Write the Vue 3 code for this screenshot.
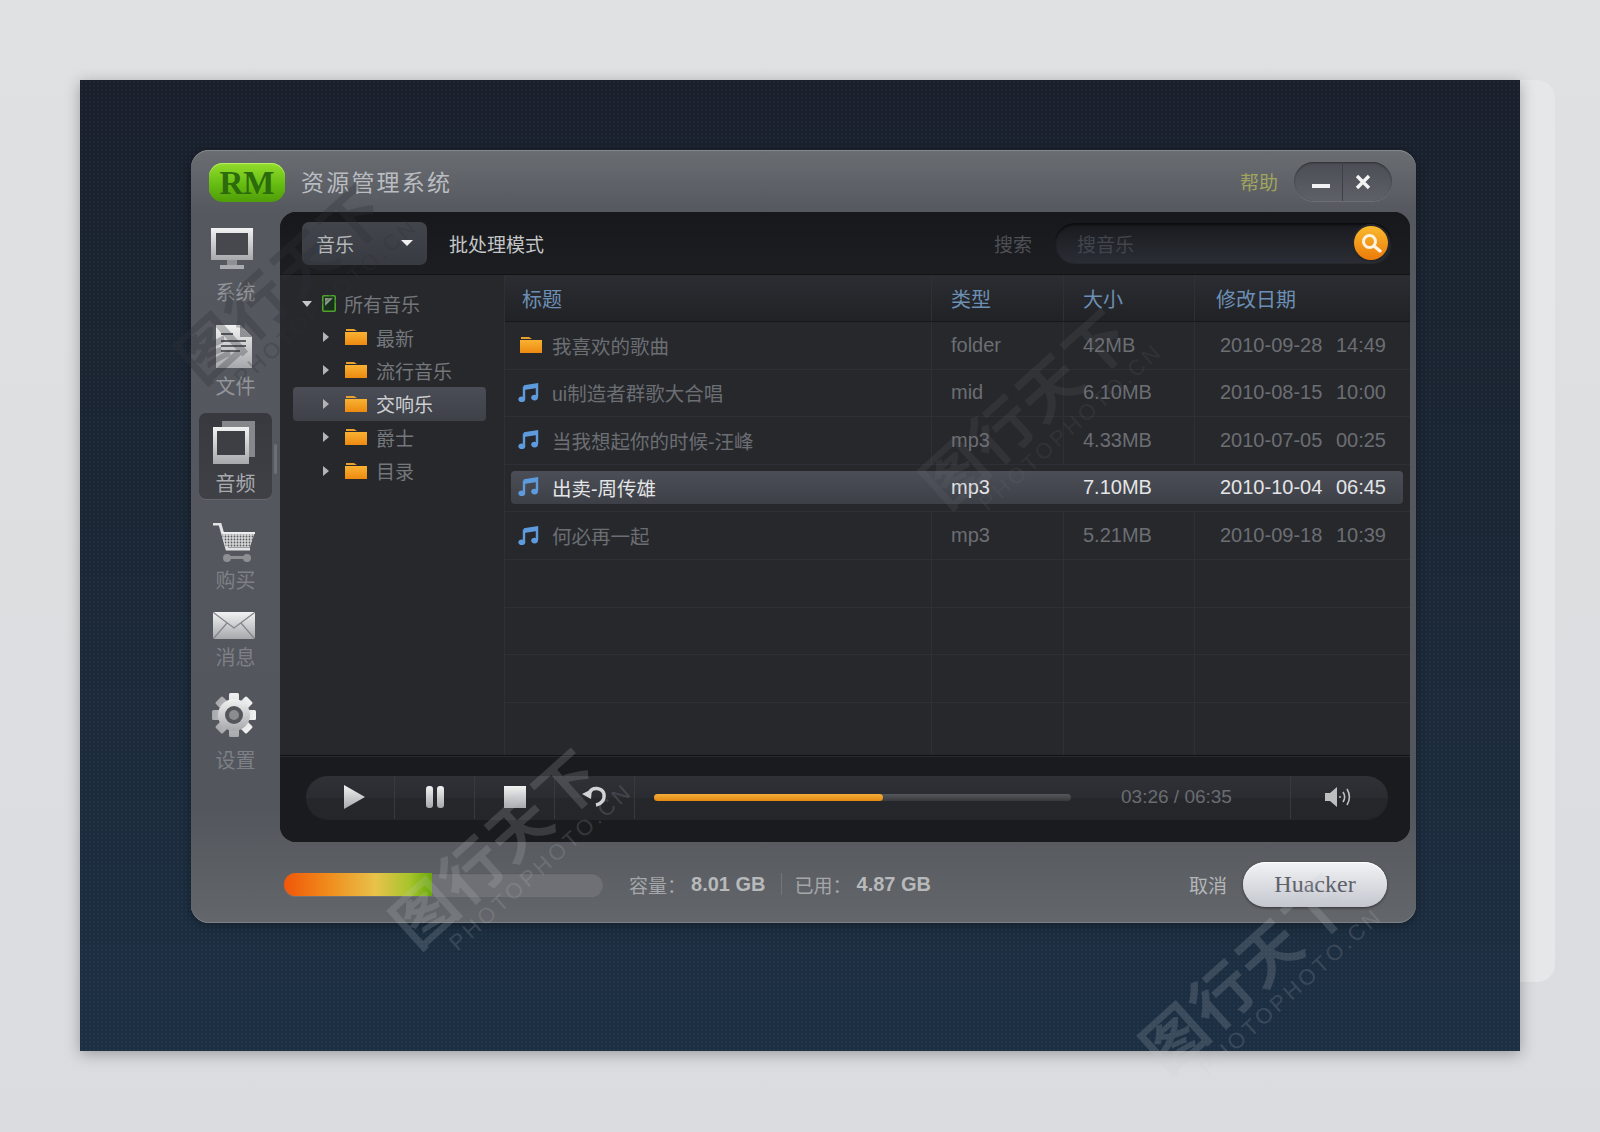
<template>
  <div class="page">
    <div class="ghost"></div>
    <div class="stage">
      <div class="window">
        <header class="titlebar">
          <div class="logo">RM</div>
          <h1 class="app-title">资源管理系统</h1>
          <a class="help">帮助</a>
          <div class="win-btns">
            <span class="win-btn"><i class="min-bar"></i></span>
            <span class="win-btn">
              <svg width="18" height="18" viewBox="0 0 18 18"><path d="M3 3l12 12M15 3L3 15" stroke="#f4f4f4" stroke-width="3.4" /></svg>
            </span>
          </div>
        </header>

        <div class="body">
          <nav class="side">
            <div class="nav-item n-sys">
              <svg width="44" height="42" viewBox="0 0 44 42">
                <rect x="1" y="0" width="42" height="32" fill="url(#silver)" />
                <rect x="6" y="5" width="32" height="22" fill="#46484e" />
                <rect x="17" y="32" width="10" height="5" fill="#8e9094" />
                <rect x="10" y="37" width="24" height="4" fill="#a9abae" />
              </svg>
              <span class="nav-label l-sys">系统</span>
            </div>
            <div class="nav-item n-file">
              <svg width="36" height="43" viewBox="0 0 36 43">
                <path d="M0 0H24L36 12V43H0Z" fill="url(#silver)" />
                <path d="M24 0L36 12H24Z" fill="#8e9094" />
                <path d="M5 9H17M5 16H30M5 21H30M5 26H24" stroke="#5b5d62" stroke-width="2" />
              </svg>
              <span class="nav-label">文件</span>
            </div>
            <div class="nav-item nav-active">
              <svg width="44" height="44" viewBox="0 0 44 44">
                <path d="M10 0H43V36H36V6H10Z" fill="#85878b" />
                <rect x="1" y="6" width="36" height="37" fill="url(#silver)" />
                <rect x="5" y="10" width="28" height="24" fill="#3d3f45" />
              </svg>
              <span class="nav-label">音频</span>
            </div>
            <div class="nav-item n-cart">
              <svg width="44" height="40" viewBox="0 0 44 40">
                <defs>
                  <pattern id="cartdots" width="3" height="3" patternUnits="userSpaceOnUse"><rect width="3" height="3" fill="#d6d7d8" /><circle cx="1.5" cy="1.5" r="0.9" fill="#5a5c60" /></pattern>
                </defs>
                <path d="M1 1H8L15 26H38" fill="none" stroke="#e2e3e4" stroke-width="3" />
                <path d="M9 9H43L38 24H14Z" fill="url(#cartdots)" />
                <path d="M9 9H43V11H10Z" fill="#eee" />
                <rect x="14" y="33" width="22" height="3" fill="#8d8f93" />
                <circle cx="15" cy="35" r="4" fill="#8d8f93" />
                <circle cx="35" cy="35" r="4" fill="#8d8f93" />
              </svg>
              <span class="nav-label dim">购买</span>
            </div>
            <div class="nav-item n-mail">
              <svg width="44" height="28" viewBox="0 0 44 28">
                <rect x="1" y="0" width="42" height="27" rx="2" fill="url(#silver)" />
                <path d="M2 1L22 16L42 1M2 26L15 11M42 26L29 11" fill="none" stroke="#83858a" stroke-width="1.2" />
              </svg>
              <span class="nav-label dim">消息</span>
            </div>
            <div class="nav-item n-gear">
              <svg width="44" height="44" viewBox="0 0 44 44">
                <g fill="url(#silver)">
                  <rect v-for="a in gearTeeth" :key="a" x="17" y="0" width="10" height="44" rx="1.5" :transform="`rotate(${a} 22 22)`" />
                  <circle cx="22" cy="22" r="16" />
                </g>
                <circle cx="22" cy="22" r="9" fill="#54565c" />
                <circle cx="22" cy="22" r="5" fill="#8a8c90" />
              </svg>
              <span class="nav-label dim">设置</span>
            </div>
            <i class="side-handle"></i>
          </nav>

          <main class="panel">
            <div class="toolbar">
              <div class="select">
                <span>音乐</span>
                <i class="caret-down"></i>
              </div>
              <span class="batch">批处理模式</span>
              <span class="search-label">搜索</span>
              <div class="search">
                <span class="placeholder">搜音乐</span>
                <span class="search-btn">
                  <svg width="22" height="22" viewBox="0 0 22 22">
                    <circle cx="9.5" cy="9.5" r="6" fill="none" stroke="#fff3df" stroke-width="3" />
                    <path d="M14 14l6 5" stroke="#fff3df" stroke-width="3.4" stroke-linecap="round" />
                  </svg>
                </span>
              </div>
            </div>

            <div class="content">
              <aside class="tree">
                <div class="tree-row root">
                  <i class="tri-down"></i>
                  <svg width="14" height="17" viewBox="0 0 14 17">
                    <rect x="0.8" y="0.8" width="12.4" height="15.4" rx="1" fill="#16301a" stroke="#4fa32a" stroke-width="1.6" />
                    <path d="M3 11V3H11Z" fill="#8f9a8c" />
                  </svg>
                  <span>所有音乐</span>
                </div>
                <div v-for="f in folders" :key="f.name" class="tree-row child" :class="{ on: f.on }">
                  <i class="tri-right"></i>
                  <svg class="folder" width="22" height="16" viewBox="0 0 22 16"><use href="#folder-icon" /></svg>
                  <span>{{ f.name }}</span>
                </div>
              </aside>

              <section class="table">
                <div class="row head">
                  <div class="cell c1">标题</div>
                  <div class="cell c2">类型</div>
                  <div class="cell c3">大小</div>
                  <div class="cell c4">修改日期</div>
                </div>
                <div v-for="r in rows" :key="r.title" class="row" :class="{ sel: r.sel }">
                  <div class="cell c1">
                    <svg v-if="r.type === 'folder'" class="row-icon fold" width="22" height="16" viewBox="0 0 22 16"><use href="#folder-icon" /></svg>
                    <svg v-else class="row-icon" width="22" height="20" viewBox="0 0 22 20">
                      <path d="M6 3.5L19 1.5V14M6 3.5V16" fill="none" stroke="#5d9bdc" stroke-width="2.4" />
                      <path d="M6 3.5L19 1.5V5L6 7Z" fill="#5d9bdc" />
                      <ellipse cx="3.8" cy="16.2" rx="3.4" ry="2.8" fill="#5d9bdc" />
                      <ellipse cx="16.6" cy="14.6" rx="3.4" ry="2.8" fill="#5d9bdc" />
                    </svg>
                    <span class="row-title">{{ r.title }}</span>
                  </div>
                  <div class="cell c2">{{ r.type }}</div>
                  <div class="cell c3">{{ r.size }}</div>
                  <div class="cell c4"><span>{{ r.date }}</span><span>{{ r.time }}</span></div>
                </div>
                <div v-for="n in 4" :key="n" class="row empty" :class="{ last: n === 4 }">
                  <div class="cell c1"></div>
                  <div class="cell c2"></div>
                  <div class="cell c3"></div>
                  <div class="cell c4"></div>
                </div>
              </section>
            </div>

            <div class="player">
              <div class="player-bar">
                <button class="pbtn first">
                  <svg width="22" height="24" viewBox="0 0 22 24"><path d="M1 0L22 12L1 24Z" fill="url(#silver)" /></svg>
                </button>
                <button class="pbtn">
                  <svg width="20" height="22" viewBox="0 0 20 22"><rect x="1" y="0" width="7" height="22" rx="3" fill="url(#silver)" /><rect x="12" y="0" width="7" height="22" rx="3" fill="url(#silver)" /></svg>
                </button>
                <button class="pbtn">
                  <svg width="22" height="22" viewBox="0 0 22 22"><rect width="22" height="22" fill="url(#silver)" /></svg>
                </button>
                <button class="pbtn">
                  <svg width="28" height="26" viewBox="0 0 28 26">
                    <path d="M9 8C11 3 21 3 23 10C24 16 20 20 15 21" fill="none" stroke="#d2d3d4" stroke-width="3.4" />
                    <path d="M1 10L11 5L10 15Z" fill="#d2d3d4" />
                  </svg>
                </button>
                <div class="track"><div class="track-fill" :style="{ width: progress + '%' }"></div></div>
                <span class="time">03:26 / 06:35</span>
                <button class="pbtn sound">
                  <svg width="26" height="20" viewBox="0 0 26 20">
                    <path d="M0 6H5L12 0V20L5 14H0Z" fill="#bdbec0" />
                    <circle cx="15" cy="10" r="1" fill="#bdbec0" />
                    <path d="M18 5C20 8 20 12 18 15M22 2C25 7 25 13 22 18" fill="none" stroke="#bdbec0" stroke-width="1.6" />
                  </svg>
                </button>
              </div>
            </div>
          </main>
        </div>

        <footer class="footer">
          <div class="capacity"><div class="capacity-fill" :style="{ width: usedPct + '%' }"></div></div>
          <span class="stat first-stat">容量：</span><b class="num">8.01 GB</b>
          <i class="stat-sep"></i>
          <span class="stat">已用：</span><b class="num">4.87 GB</b>
          <span class="cancel">取消</span>
          <button class="user-btn">Huacker</button>
        </footer>
      </div>
    </div>

    <div v-for="w in watermarks" :key="w.x" class="mark" :class="w.tone" :style="{ left: w.x + 'px', top: w.y + 'px' }">
      <div class="mark-cjk">图行天下</div>
      <div class="mark-en">PHOTOPHOTO.CN</div>
    </div>

    <svg class="defs" width="0" height="0">
      <defs>
        <linearGradient id="silver" x1="0" y1="0" x2="0" y2="1">
          <stop offset="0" stop-color="#f2f2f2" />
          <stop offset="1" stop-color="#a6a8ab" />
        </linearGradient>
        <linearGradient id="folderfill" x1="0" y1="0" x2="0" y2="1">
          <stop offset="0" stop-color="#f9b233" />
          <stop offset="1" stop-color="#ec8a10" />
        </linearGradient>
        <symbol id="folder-icon" viewBox="0 0 22 16">
          <path d="M1 0H9L12 2H1Z" fill="#e9a02c" />
          <rect x="0" y="3" width="22" height="13" fill="url(#folderfill)" />
        </symbol>
      </defs>
    </svg>
  </div>
</template>

<script setup>
const gearTeeth = [0, 45, 90, 135]
const progress = 54.9
const usedPct = 46.5

const folders = [
  { name: '最新' },
  { name: '流行音乐' },
  { name: '交响乐', on: true },
  { name: '爵士' },
  { name: '目录' },
]

const rows = [
  { title: '我喜欢的歌曲', type: 'folder', size: '42MB', date: '2010-09-28', time: '14:49' },
  { title: 'ui制造者群歌大合唱', type: 'mid', size: '6.10MB', date: '2010-08-15', time: '10:00' },
  { title: '当我想起你的时候-汪峰', type: 'mp3', size: '4.33MB', date: '2010-07-05', time: '00:25' },
  { title: '出卖-周传雄', type: 'mp3', size: '7.10MB', date: '2010-10-04', time: '06:45', sel: true },
  { title: '何必再一起', type: 'mp3', size: '5.21MB', date: '2010-09-18', time: '10:39' },
]

const watermarks = [
  { x: 160, y: 340, tone: 'dark' },
  { x: 905, y: 465, tone: 'mid' },
  { x: 375, y: 905, tone: 'light' },
  { x: 1125, y: 1030, tone: 'light' },
]
</script>

<style>
html, body { margin: 0; background: #dfe0e2; }
</style>

<style scoped>
.page {
  position: relative;
  width: 1600px;
  height: 1132px;
  overflow: hidden;
  padding: 80px;
  box-sizing: border-box;
  background: linear-gradient(#e0e1e2, #dbdcdf);
  font-family: "Liberation Sans", "Noto Sans CJK SC", sans-serif;
}
.ghost {
  position: absolute;
  left: 1500px; top: 80px;
  width: 55px; height: 902px;
  border-radius: 0 18px 18px 0;
  background: #e6e7e8;
}
.stage {
  position: relative;
  width: 1440px;
  height: 971px;
  padding: 70px 0 0 111px;
  box-sizing: border-box;
  background:
    radial-gradient(circle at 2px 2px, rgba(255,255,255,.03) 1px, transparent 1.4px) 0 0 / 4px 4px,
    linear-gradient(#19202c, #1b2736 50%, #1c2f43);
  box-shadow: 0 3px 14px rgba(0,0,0,.3);
}

.window {
  width: 1225px;
  height: 773px;
  border-radius: 18px;
  background: linear-gradient(#6a6d72 0, #55585e 8%, #53565c 85%, #63666a);
  box-shadow: inset 0 1px 0 #84878b, inset 0 -1px 0 #7d8084, 0 2px 10px rgba(0,0,0,.35);
  display: flex;
  flex-direction: column;
}

/* title bar */
.titlebar {
  height: 62px;
  display: flex;
  align-items: center;
  padding: 0 24px 0 18px;
}
.logo {
  width: 76px; height: 39px;
  margin-top: 2px;
  border-radius: 14px;
  background: linear-gradient(#93dc2c, #65bd12 55%, #4f9c08);
  box-shadow: inset 0 1px 0 #b8ee66;
  text-align: center;
  font: bold 33px/41px "Liberation Serif", serif;
  color: #2c6a0b;
}
.app-title {
  margin: 0 0 0 16px;
  font-size: 23px;
  font-weight: 400;
  letter-spacing: 2.2px;
  color: #b9bcc0;
}
.help { margin-left: auto; font-size: 19px; color: #a0a55e; margin-right: 16px; }
.win-btns {
  width: 98px; height: 39px;
  margin-top: 1px;
  border-radius: 20px;
  display: flex;
  background: linear-gradient(#4a4d53, #5e6168);
  box-shadow: inset 0 1px 2px rgba(0,0,0,.4), 0 1px 0 rgba(255,255,255,.12);
}
.win-btn { flex: 1; display: flex; align-items: center; justify-content: center; }
.win-btn:first-child { border-right: 1px solid #3e4046; padding-left: 6px; }
.win-btn:last-child { padding-right: 8px; }
.min-bar { width: 18px; height: 4px; background: #f2f2f2; margin-top: 9px; }

/* sidebar */
.body { display: flex; height: 630px; }
.side {
  position: relative;
  width: 89px;
  flex: none;
  display: flex;
  flex-direction: column;
  align-items: center;
  padding-top: 16px;
  box-sizing: border-box;
}
.nav-item { display: flex; flex-direction: column; align-items: center; }
.nav-item svg { transform: translateX(-2px); }
.n-sys svg { transform: translateX(-4px); }
.nav-label { font-size: 20px; line-height: 26px; color: #93959a; margin-top: 6px; }
.nav-label.dim { color: #7d8086; margin-top: 5px; }
.l-sys { margin-top: 10px; }
.n-file { margin-top: 19px; }
.nav-active {
  margin-top: 13px;
  width: 73px;
  height: 86px;
  padding-top: 8px;
  box-sizing: border-box;
  border-radius: 7px;
  background: linear-gradient(#37393e, #3f4146);
  box-shadow: 0 1px 0 rgba(255,255,255,.1);
}
.nav-active .nav-label { color: #a8aaae; }
.n-cart { margin-top: 24px; }
.n-mail { margin-top: 18px; }
.n-gear { margin-top: 22px; }
.n-gear .nav-label { margin-top: 11px; }
.side-handle {
  position: absolute;
  right: 3px; top: 232px;
  width: 3px; height: 30px;
  border-radius: 2px;
  background: #6c6f74;
}

/* main panel */
.panel {
  width: 1130px;
  border-radius: 16px;
  overflow: hidden;
  background: #1a1b1e;
  display: flex;
  flex-direction: column;
}
.toolbar {
  height: 63px;
  flex: none;
  display: flex;
  align-items: center;
  padding-left: 22px;
  padding-right: 18px;
  box-sizing: border-box;
  background: linear-gradient(#17181b, #1d1e21);
  border-bottom: 1px solid #111214;
}
.select {
  width: 125px; height: 43px;
  border-radius: 7px;
  background: linear-gradient(#42454c, #383b41);
  display: flex;
  align-items: center;
  padding: 0 14px;
  box-sizing: border-box;
  font-size: 19px;
  color: #b6b8bb;
}
.caret-down {
  margin-left: auto;
  margin-right: 0;
  border: 6px solid transparent;
  border-top: 6px solid #f0f0f0;
  border-bottom: 0;
}
.batch { margin-left: 22px; font-size: 19px; color: #c4c5c7; }
.search-label { margin-left: auto; font-size: 19px; color: #4c4f55; }
.search {
  margin-left: 23px;
  width: 337px; height: 40px;
  border-radius: 20px;
  background: linear-gradient(#191a1e, #2a2d35);
  box-shadow: inset 0 2px 2px #0c0d0f, 0 1px 0 rgba(255,255,255,.05);
  display: flex;
  align-items: center;
  padding-left: 22px;
  box-sizing: border-box;
  position: relative;
}
.placeholder { font-size: 19px; color: #41454d; }
.search-btn {
  position: absolute;
  right: 4px; top: 3px;
  width: 34px; height: 34px;
  border-radius: 50%;
  background: linear-gradient(#f9ba2e, #ec7a0a);
  box-shadow: 0 0 0 2px #25262a;
  display: flex;
  align-items: center;
  justify-content: center;
}

.content { display: flex; height: 480px; flex: none; }

/* tree */
.tree {
  width: 225px;
  flex: none;
  padding: 12px 18px 0 13px;
  box-sizing: border-box;
  background: #27282c;
  border-right: 1px solid #2f3035;
}
.tree-row {
  height: 33.4px;
  display: flex;
  align-items: center;
  font-size: 19px;
  color: #74777b;
  border-radius: 4px;
}
.tree-row.root { padding-left: 9px; }
.tree-row.root svg { margin: 0 8px 0 10px; }
.tree-row.child { padding-left: 30px; }
.tree-row .folder { margin: 0 9px 0 16px; }
.tree-row.on {
  background: linear-gradient(#4a4d55, #3e4148);
  color: #cfd0d2;
}
.tri-down {
  width: 0; height: 0;
  border: 5px solid transparent;
  border-top: 6px solid #c6c7c9;
  border-bottom: 0;
}
.tri-right {
  width: 0; height: 0;
  border: 5px solid transparent;
  border-left: 6px solid #b2b4b6;
  border-right: 0;
}

/* file table */
.table { flex: 1; display: flex; flex-direction: column; background: #27282c; }
.row {
  position: relative;
  height: 47.6px;
  flex: none;
  display: grid;
  grid-template-columns: 427px 132px 131px 1fr;
  border-bottom: 1px solid #2f3035;
  box-sizing: border-box;
  font-size: 20px;
  color: #6b6e73;
}
.row.last { flex: 1; border-bottom: 0; }
.row.head {
  height: 47px;
  background: linear-gradient(#2c2d32, #212226);
  border-bottom: 1px solid #17181a;
  color: #6c90b5;
}
.cell {
  display: flex;
  align-items: center;
  border-right: 1px solid #2f3035;
  box-sizing: border-box;
  padding-left: 19px;
  position: relative;
}
.cell.c1 { padding-left: 13px; }
.head .c1 { padding-left: 17px; }
.cell.c4 { border-right: 0; padding: 0 24px 0 25px; justify-content: space-between; }
.head .cell.c4 { padding-left: 21px; }
.row-icon { flex: none; margin-right: 12px; }
.row-icon.fold { margin-left: 2px; margin-right: 10px; }
.row-title { font-size: 19.5px; }
.row.sel::before {
  content: "";
  position: absolute;
  left: 6px; right: 7px; top: 6px; bottom: 7px;
  border-radius: 4px;
  background: linear-gradient(#4b4e56, #3d4047);
}
.row.sel { color: #e4e5e6; }
.row.sel .cell { border-right-color: transparent; padding-bottom: 2px; }

/* player */
.player {
  flex: 1;
  display: flex;
  align-items: center;
  padding: 0 22px 4px 26px;
  background: #1a1b1e;
  border-top: 1px solid #101113;
  box-shadow: inset 0 1px 0 #2a2b2f;
}
.player-bar {
  width: 100%;
  height: 43px;
  border-radius: 22px;
  display: flex;
  align-items: center;
  background: linear-gradient(#303136 0, #2b2c31 50%, #26272b 52%, #25262a);
  box-shadow: 0 1px 0 rgba(255,255,255,.05);
}
.pbtn {
  width: 80px; height: 43px;
  flex: none;
  padding: 0;
  display: flex;
  align-items: center;
  justify-content: center;
  background: none;
  border: 0;
  border-right: 1px solid #38393e;
}
.pbtn.first { width: 89px; padding-left: 8px; }
.track {
  width: 417px; height: 7px;
  margin-left: 19px;
  border-radius: 4px;
  background: linear-gradient(#55585c, #38393d);
}
.track-fill {
  height: 100%;
  border-radius: 4px;
  background: linear-gradient(#f4ae3a, #e38a12);
}
.time { margin-left: 50px; width: 169px; font-size: 19px; color: #696c71; white-space: nowrap; }
.pbtn.sound { flex: 1; border-right: 0; border-left: 1px solid #38393e; padding-right: 4px; }

/* footer */
.footer {
  flex: 1;
  display: flex;
  align-items: center;
  padding: 3px 29px 0 93px;
}
.capacity {
  width: 319px; height: 23px;
  flex: none;
  border-radius: 12px;
  overflow: hidden;
  background: #6e7075;
  box-shadow: inset 0 1px 1px rgba(0,0,0,.2), 0 1px 0 rgba(255,255,255,.1);
}
.capacity-fill {
  height: 100%;
  background: linear-gradient(90deg, #f0560a 0, #f08c1c 30%, #e8c24a 62%, #a6c42c 85%, #6aa80a 100%);
}
.stat { font-size: 19px; color: #a5a7aa; }
.first-stat { margin-left: 26px; }
.num { font-size: 20px; font-weight: 700; color: #b7b9bb; margin-left: 5px; }
.stat-sep { width: 1px; height: 22px; background: #73767a; margin: 0 13px 0 15px; }
.cancel { margin-left: auto; font-size: 19px; color: #b4b6b9; }
.user-btn {
  margin-left: 16px;
  width: 144px; height: 45px;
  border: 0;
  border-radius: 23px;
  background: linear-gradient(#f2f3f5, #c4c7cf);
  box-shadow: inset 0 1px 1px #fff, 0 1px 3px rgba(0,0,0,.5);
  font: 400 24px "Liberation Serif", serif;
  color: #5e616a;
}

/* stock-site marks printed over the shot */
.mark {
  position: absolute;
  transform: rotate(-42deg);
  transform-origin: left top;
  white-space: nowrap;
  pointer-events: none;
}
.mark-cjk { font: 700 62px/70px "Noto Sans CJK SC", sans-serif; letter-spacing: 2px; }
.mark-en { font-size: 22px; line-height: 26px; letter-spacing: 3.4px; margin-left: 30px; }
.mark.dark { color: rgba(48,50,56,.3); }
.mark.mid { color: rgba(120,122,128,.14); }
.mark.light { color: rgba(200,203,208,.18); }
.defs { position: absolute; }
</style>
